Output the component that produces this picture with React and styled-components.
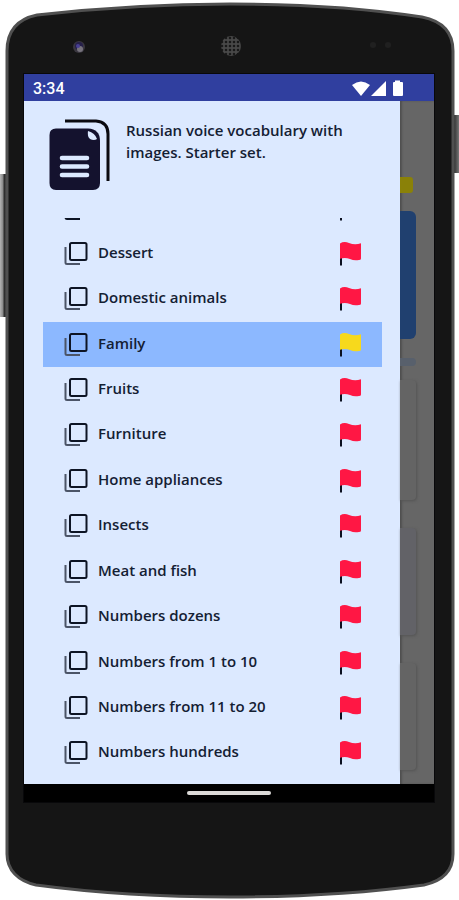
import React, { useState } from "react";
import styled, { createGlobalStyle } from "styled-components";

const TOPICS = [
  "Dessert",
  "Domestic animals",
  "Family",
  "Fruits",
  "Furniture",
  "Home appliances",
  "Insects",
  "Meat and fish",
  "Numbers dozens",
  "Numbers from 1 to 10",
  "Numbers from 11 to 20",
  "Numbers hundreds",
];

function PhoneBody() {
  return (
    <StyledBody viewBox="0 0 459 900" preserveAspectRatio="none" aria-hidden="true">
      <defs>
        <linearGradient id="leftKey">
          <stop offset="0" stopColor="#b5b5b5" />
          <stop offset="0.4" stopColor="#8a8a8a" />
          <stop offset="0.6" stopColor="#2c2c2c" />
          <stop offset="1" stopColor="#444" />
        </linearGradient>
        <linearGradient id="rightKey">
          <stop offset="0" stopColor="#222" />
          <stop offset="1" stopColor="#777" />
        </linearGradient>
        <pattern id="mesh" width="4" height="4" patternUnits="userSpaceOnUse">
          <rect width="4" height="4" fill="#484848" />
          <circle cx="2" cy="2" r="1.3" fill="#191919" />
        </pattern>
      </defs>
      <rect x="0" y="174" width="7" height="143" fill="url(#leftKey)" />
      <rect x="453" y="115" width="6" height="58" fill="url(#rightKey)" />
      <path
        d="M7 51C7 31 18 19 37 15C100 8 165 4 230 4C300 4 365 8 422 17C442 21 453 32 453 51V854C453 871 442 881 424 885C365 893 300 897 230 897C160 897 96 893 36 885C18 881 7 870 7 854Z"
        fill="#151515"
        stroke="#505050"
        strokeWidth="3"
      />
      <circle cx="79" cy="47" r="6" fill="#3a3740" />
      <circle cx="79" cy="46" r="4" fill="#26204a" />
      <circle cx="80" cy="49" r="3" fill="#77737d" />
      <circle cx="78" cy="46" r="2" fill="#483f94" />
      <circle cx="231" cy="46" r="10" fill="url(#mesh)" />
      <circle cx="373" cy="45" r="3" fill="#202020" />
      <circle cx="388" cy="45" r="3" fill="#202020" />
    </StyledBody>
  );
}

function StatusIcons() {
  return (
    <svg width="52" height="18" viewBox="0 0 52 18" fill="#fff" aria-hidden="true">
      <path d="M0 5Q9 -2 18 5L9 16Z" />
      <path d="M19 16L34 1V16Z" />
      <path d="M43 2V0.500H48V2H50Q51 2 51 3V15Q51 16 50 16H42Q41 16 41 15V3Q41 2 42 2Z" />
    </svg>
  );
}

function FilesIcon() {
  return (
    <svg width="61" height="72" viewBox="0 0 61 72" fill="none" aria-hidden="true">
      <path d="M16 2H47Q59 3 59 15V62" stroke="#0a0a10" strokeWidth="3" />
      <path d="M7 9.500H39Q51 10 51 22V64Q51 71 44 71H7Q0.500 71 0.500 64V16Q0.500 9.500 7 9.500Z" fill="#14122e" />
      <path d="M39 12Q46 14 48 20Q45 22 41 20Q38 17 39 12Z" fill="#dce9ff" />
      <path d="M13 39H38M13 47.500H38M13 56H38" stroke="#dce9ff" strokeWidth="4.600" strokeLinecap="round" />
    </svg>
  );
}

function StackIcon({ backColor = "#4b5467" }) {
  return (
    <svg width="24" height="26" viewBox="0 0 24 26" fill="none" aria-hidden="true">
      <path d="M1.500 6V21.500Q1.500 23 3 23H16" stroke={backColor} strokeWidth="2" />
      <rect x="6" y="2" width="16.500" height="17" rx="1.500" stroke="#0d1424" strokeWidth="2" />
    </svg>
  );
}

function FlagIcon({ color }) {
  return (
    <svg width="24" height="26" viewBox="0 0 24 26" aria-hidden="true">
      <path d="M1 10H3V24.500H1Z" fill="#0b1020" />
      <path d="M1 2.500Q5 -0.200 10 2Q16 4.500 22 2.200V17.500Q22 19 20 19Q15 20 11 18Q6 16.200 1 17.800Z" fill={color} />
    </svg>
  );
}

function TopicItem({ name, selected, onSelect }) {
  return (
    <StyledItem $selected={selected}>
      <StyledTopicButton onClick={onSelect} aria-pressed={selected}>
        <StackIcon />
        <span>{name}</span>
      </StyledTopicButton>
      <StyledFlagButton aria-label={`Flag ${name}`}>
        <FlagIcon color={selected ? "#f7d91c" : "#ff1744"} />
      </StyledFlagButton>
    </StyledItem>
  );
}

function App() {
  const [topic, setTopic] = useState("Family");

  return (
    <>
      <GlobalStyle />
      <StyledPhone>
        <PhoneBody />
        <StyledScreen>
          <StyledStatusBar>
            <span>3:34</span>
            <StatusIcons />
          </StyledStatusBar>
          <StyledContent>
            <StyledDrawer>
              <StyledHeader>
                <FilesIcon />
                <h1>Russian voice vocabulary with images. Starter set.</h1>
              </StyledHeader>
              {/* row scrolled almost out of view */}
              <StyledScrolledRow aria-hidden="true">
                <StackIcon backColor="#0d1424" />
                <FlagIcon color="#ff1744" />
              </StyledScrolledRow>
              <StyledList>
                {TOPICS.map((name) => (
                  <TopicItem
                    key={name}
                    name={name}
                    selected={name === topic}
                    onSelect={() => setTopic(name)}
                  />
                ))}
              </StyledList>
            </StyledDrawer>
            <StyledBackdrop>
              <StyledSwitch />
              <StyledBlueCard />
              <StyledPill />
              <StyledCard $height={120} />
              <StyledCard $height={107} $tint />
              <StyledCard $height={107} />
            </StyledBackdrop>
          </StyledContent>
          <StyledNavBar>
            <StyledHandle aria-label="Home" />
          </StyledNavBar>
        </StyledScreen>
      </StyledPhone>
    </>
  );
}

const GlobalStyle = createGlobalStyle`
  * {
    box-sizing: border-box;
  }
  body {
    margin: 0;
    background: #fff;
    font-family: "Open Sans", "Noto Sans", sans-serif;
  }
  button {
    border: 0;
    padding: 0;
    background: none;
    font: inherit;
    color: inherit;
    cursor: pointer;
  }
  svg {
    display: block;
    flex-shrink: 0;
  }
`;

const StyledPhone = styled.main`
  position: relative;
  display: flex;
  min-height: 100vh;
  padding: 74px 25px 98px 24px;
`;

const StyledBody = styled.svg`
  position: absolute;
  inset: 0;
  width: 100%;
  height: 100%;
`;

const StyledScreen = styled.div`
  position: relative;
  flex: 1;
  min-width: 0;
  display: flex;
  flex-direction: column;
  box-shadow: 0 0 0 1px #08080a;
`;

const StyledStatusBar = styled.div`
  display: flex;
  align-items: center;
  justify-content: space-between;
  height: 27px;
  padding: 2px 30px 0 9px;
  background: #303f9f;
  color: #fff;
  font-family: Roboto, sans-serif;
  font-size: 16px;
  font-weight: 500;
`;

const StyledContent = styled.div`
  flex: 1;
  display: flex;
`;

const StyledDrawer = styled.nav`
  flex: 1;
  min-width: 0;
  display: flex;
  flex-direction: column;
  padding: 18px 18px 8px 19px;
  background: #dce9ff;
  color: #142033;
`;

const StyledHeader = styled.header`
  display: flex;
  gap: 16px;
  min-height: 99px;
  padding-left: 6px;

  h1 {
    margin: 0;
    font-size: 15px;
    font-weight: 600;
    line-height: 22px;
  }
`;

const StyledScrolledRow = styled.div`
  display: flex;
  align-items: flex-end;
  justify-content: space-between;
  height: 4px;
  margin-bottom: 9px;
  padding: 0 19px 0 21px;
  overflow: hidden;
`;

const StyledList = styled.ul`
  flex: 1;
  display: flex;
  flex-direction: column;
  margin: 0;
  padding: 0;
  list-style: none;
`;

const StyledItem = styled.li`
  flex: 1 0 45px;
  display: flex;
  padding: 0 19px 0 21px;
  background: ${({ $selected }) => ($selected ? "#8cb8ff" : "transparent")};
`;

const StyledTopicButton = styled.button`
  flex: 1;
  display: flex;
  align-items: center;
  gap: 10px;
  text-align: left;
  font-size: 15px;
  font-weight: 600;
  line-height: 22px;

  span {
    padding-bottom: 4px;
  }
`;

const StyledFlagButton = styled.button`
  display: flex;
  align-items: center;
`;

const StyledBackdrop = styled.div`
  width: 34px;
  padding: 76px 18px 0 0;
  background: #666;
  box-shadow: inset 2px 0 2px #505050;
`;

const StyledSwitch = styled.div`
  width: 13px;
  height: 16px;
  margin-bottom: 18px;
  border-radius: 0 3px 3px 0;
  background: #8a8108;
`;

const StyledBlueCard = styled.div`
  height: 128px;
  margin-bottom: 19px;
  border-radius: 0 6px 6px 0;
  background: #20406f;
`;

const StyledPill = styled.div`
  height: 8px;
  margin-bottom: 14px;
  border-radius: 0 4px 4px 0;
  background: #58606c;
`;

const StyledCard = styled.div`
  height: ${({ $height }) => $height}px;
  margin-bottom: 28px;
  border-radius: 0 4px 4px 0;
  background: ${({ $tint }) => ($tint ? "#626267" : "#646464")};
  box-shadow: 1px 1px 3px #545454;

  &:last-child {
    margin-bottom: 0;
  }
`;

const StyledNavBar = styled.div`
  display: flex;
  align-items: center;
  justify-content: center;
  height: 18px;
  background: #000;
`;

const StyledHandle = styled.button`
  && {
    width: 84px;
    height: 4px;
    border-radius: 2px;
    background: #dcdad8;
  }
`;

export default App;
